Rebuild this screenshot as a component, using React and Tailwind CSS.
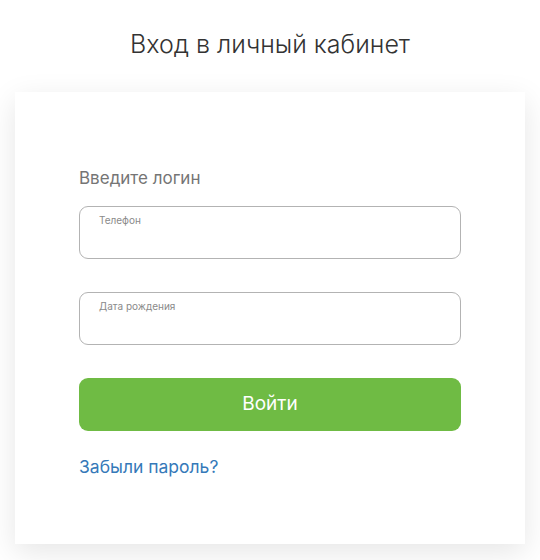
export default function App() {
  return (
    <div className="w-[540px] h-[560px] bg-white overflow-hidden" style={{ fontFamily: "Inter, 'Noto Sans', sans-serif" }}>
      <h1 className="pt-[28px] text-center text-[25px] leading-[32px] font-light text-[#333333]">Вход в личный кабинет</h1>
      <div className="mx-[15px] mt-[32px] h-[452px] bg-white shadow-[0_8px_28px_rgba(0,0,0,0.10)] px-[64px] pt-[75px]">
        <div className="text-[17px] leading-[22px] text-[#757575]">Введите логин</div>
        <div className="mt-[17px] h-[53px] rounded-[9px] border border-[#b3b3b3] px-[19px] pt-[7px]">
          <div className="text-[10px] leading-[13px] text-[#8a8a8a]">Телефон</div>
        </div>
        <div className="mt-[33px] h-[53px] rounded-[9px] border border-[#b3b3b3] px-[19px] pt-[7px]">
          <div className="text-[10px] leading-[13px] text-[#8a8a8a]">Дата рождения</div>
        </div>
        <button className="mt-[33px] w-full h-[53px] rounded-[9px] bg-[#6fbb44] text-white text-[19px] font-normal flex items-center justify-center">Войти</button>
        <div className="mt-[24px] text-[17.5px] leading-[24px] text-[#3579b9]">Забыли пароль?</div>
      </div>
    </div>
  );
}
